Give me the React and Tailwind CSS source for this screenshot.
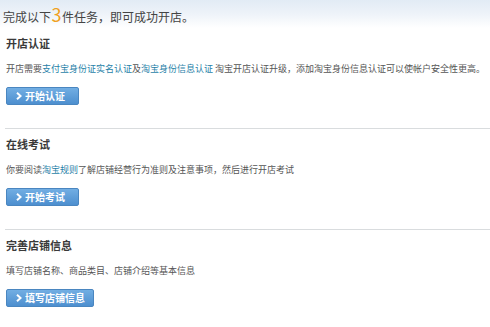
import React from "react";

const font = { fontFamily: '"Noto Sans CJK SC", "Liberation Sans", sans-serif' };

function Btn({ children, w }) {
  return (
    <div
      className={`flex h-[18px] items-center rounded-[2px] border border-[#4a86c0] bg-gradient-to-b from-[#72aee3] to-[#4d8fcf] pl-[9px] ${w}`}
    >
      <svg width="6" height="8" viewBox="0 0 6 8" className="mr-[3px]">
        <path d="M1 0.8 L4.6 4 L1 7.2" stroke="#fff" strokeWidth="2" fill="none" />
      </svg>
      <span className="text-[10px] font-bold leading-none text-white">{children}</span>
    </div>
  );
}

function Section({ title, desc, btn, w, divider }) {
  return (
    <div>
      <div className="px-[6px] pt-[8px] pb-[23px]">
        <div className="h-[14px] text-[11px] font-bold leading-[14px] text-[#3a3a3a]">{title}</div>
        <div className="mt-[13px] h-[12px] whitespace-nowrap text-[9px] leading-[12px] text-[#555]">{desc}</div>
        <div className="mt-[12px]">
          <Btn w={w}>{btn}</Btn>
        </div>
      </div>
      {divider && <div className="ml-[5px] h-px bg-[#d9dcde]" />}
    </div>
  );
}

const Link = ({ children }) => <span className="text-[#1f7fa8]">{children}</span>;

export default function App() {
  return (
    <div className="h-[327px] w-[490px] overflow-hidden bg-white" style={font}>
      <div className="flex h-[28px] items-center bg-gradient-to-b from-[#e2ebf5] via-[#eef3f9] to-white pl-[3px]">
        <span className="text-[12px] leading-none text-[#444]">
          完成以下<span className="mx-[0.5px] text-[18px] leading-none text-[#f0a020]">3</span>件任务，即可成功开店。
        </span>
      </div>
      <Section
        title="开店认证"
        desc={
          <>
            开店需要<Link>支付宝身份证实名认证</Link>及<Link>淘宝身份信息认证</Link> 淘宝开店认证升级，添加淘宝身份信息认证可以使帐户安全性更高。
          </>
        }
        btn="开始认证"
        w="w-[73px]"
        divider
      />
      <Section
        title="在线考试"
        desc={
          <>
            你要阅读<Link>淘宝规则</Link>了解店铺经营行为准则及注意事项，然后进行开店考试
          </>
        }
        btn="开始考试"
        w="w-[73px]"
        divider
      />
      <Section
        title="完善店铺信息"
        desc="填写店铺名称、商品类目、店铺介绍等基本信息"
        btn="填写店铺信息"
        w="w-[88px]"
      />
    </div>
  );
}
